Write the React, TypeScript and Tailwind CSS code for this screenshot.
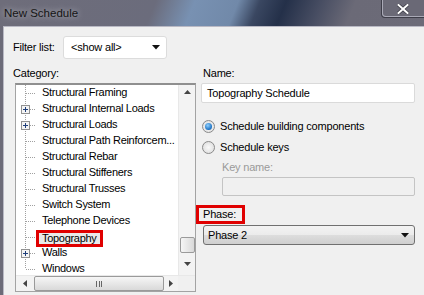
import React from "react";

type Row = { label: string; plus?: boolean; selected?: boolean; last?: boolean };

const rows: Row[] = [
  { label: "Structural Framing" },
  { label: "Structural Internal Loads", plus: true },
  { label: "Structural Loads", plus: true },
  { label: "Structural Path Reinforcem..." },
  { label: "Structural Rebar" },
  { label: "Structural Stiffeners" },
  { label: "Structural Trusses" },
  { label: "Switch System" },
  { label: "Telephone Devices" },
  { label: "Topography", selected: true },
  { label: "Walls", plus: true },
  { label: "Windows", last: true },
];

function TreeLines({ plus, last }: { plus?: boolean; last?: boolean }) {
  return (
    <svg width="20" height="16" className="shrink-0" shapeRendering="crispEdges">
      <line x1="9.5" y1="0" x2="9.5" y2={last ? 8 : 16} stroke="#a0a0a0" strokeDasharray="1 1" />
      <line x1="10" y1="8.5" x2="20" y2="8.5" stroke="#a0a0a0" strokeDasharray="1 1" />
      {plus && (
        <>
          <rect x="5.5" y="4.5" width="8" height="8" fill="#f4f4f4" stroke="#919191" />
          <line x1="7" y1="8.5" x2="12" y2="8.5" stroke="#1f3f7a" />
          <line x1="9.5" y1="6" x2="9.5" y2="11" stroke="#1f3f7a" />
        </>
      )}
    </svg>
  );
}

function Triangle() {
  return (
    <svg width="8" height="5" viewBox="0 0 8 5">
      <path d="M0 0 H8 L4 4.5 Z" fill="#111" />
    </svg>
  );
}

export default function App() {
  return (
    <div
      className="w-[424px] h-[295px] overflow-hidden flex flex-col bg-[#6c6b78] text-[11px] tracking-[-0.2px] text-black"
      style={{ fontFamily: '"Liberation Sans", Arial, sans-serif' }}
    >
      {/* title bar */}
      <div className="h-[26px] shrink-0 flex items-start justify-between bg-[linear-gradient(112deg,#6e6d7a_0%,#6b6c7c_36%,#7891b2_45%,#7189a9_55%,#3a4761_60%,#243049_66%,#474d62_74%,#6b6a77_82%,#6c6b78_100%)]">
        <div className="pl-[4px] pt-[5px] text-[11.5px] tracking-normal text-[#151515] [text-shadow:0_0_6px_rgba(255,255,255,0.6)]">
          New Schedule
        </div>
        <div className="w-[44px] h-[18px] -mr-[1px] border border-t-0 border-[#3d3d48] rounded-bl-[4px] shadow-[inset_1px_-1px_0_#a9a9b6] bg-[#6a6976] flex items-center justify-center">
          <svg width="12" height="10" viewBox="0 0 12 10">
            <path d="M1.5 1 L10.5 9 M10.5 1 L1.5 9" stroke="#3a3a44" strokeWidth="3.4" strokeLinecap="square" />
            <path d="M1.5 1 L10.5 9 M10.5 1 L1.5 9" stroke="#ffffff" strokeWidth="2" strokeLinecap="square" />
          </svg>
        </div>
      </div>

      {/* body */}
      <div className="flex-1 flex pl-[3px]">
        <div className="flex-1 bg-[#f0f0f0] border-l border-t border-[#b9b9c4] pl-[9px] pt-[9px]">
          {/* filter row */}
          <div className="flex items-center h-[23px]">
            <span className="w-[50px]">Filter list:</span>
            <div className="w-[104px] h-[23px] bg-white border border-[#dcdcdc] rounded-[3px] flex items-center justify-between pl-[7px] pr-[6px]">
              <span>&lt;show all&gt;</span>
              <Triangle />
            </div>
          </div>

          <div className="flex mt-[8px]">
            {/* left column */}
            <div className="w-[183px] flex flex-col">
              <div className="h-[12px] leading-[12px]">Category:</div>
              <div className="mt-[4px] ml-[2px] w-[181px] h-[209px] border border-[#a3a3a3] border-t-2 border-t-[#8f8f8f] bg-white flex flex-col">
                <div className="flex flex-1 min-h-0">
                  <div className="flex-1 overflow-hidden flex flex-col tracking-[-0.3px]">
                    {rows.map((r) => (
                      <div key={r.label} className="h-[16px] flex items-start shrink-0">
                        <TreeLines plus={r.plus} last={r.last} />
                        <span
                          className={
                            r.selected
                              ? "relative h-[17px] mt-[1px] -mb-[2px] border-[3px] border-[#e00000] bg-[#eaeaea] pl-[3px] pr-[3px] leading-[11px] whitespace-nowrap"
                              : "h-[16px] pl-[6px] leading-[15px] whitespace-nowrap"
                          }
                        >
                          {r.label}
                        </span>
                      </div>
                    ))}
                  </div>
                  {/* vertical scrollbar */}
                  <div className="w-[17px] bg-[#f3f3f3] border-l border-[#e8e8e8] flex flex-col items-center">
                    <div className="h-[14px] flex items-center justify-center">
                      <svg width="7" height="4" viewBox="0 0 7 4">
                        <path d="M0 4 H7 L3.5 0 Z" fill="#444" />
                      </svg>
                    </div>
                    <div className="flex-1" />
                    <div className="w-[15px] h-[16px] rounded-[2px] border border-[#9a9a9a] bg-[linear-gradient(90deg,#f6f6f6,#d9d9d9)]" />
                    <div className="h-[22px] flex items-center justify-center">
                      <svg width="7" height="4" viewBox="0 0 7 4">
                        <path d="M0 0 H7 L3.5 4 Z" fill="#444" />
                      </svg>
                    </div>
                  </div>
                </div>
                {/* horizontal scrollbar */}
                <div className="h-[16px] flex bg-[#f3f3f3] border-t border-[#e8e8e8]">
                  <div className="w-[18px] flex items-center justify-center">
                    <svg width="4" height="7" viewBox="0 0 4 7">
                      <path d="M4 0 V7 L0 3.5 Z" fill="#444" />
                    </svg>
                  </div>
                  <div className="w-[130px] h-[15px] rounded-[2px] border border-[#9a9a9a] bg-[linear-gradient(180deg,#f6f6f6,#d9d9d9)] flex items-center justify-center">
                    <svg width="8" height="6" viewBox="0 0 8 6" shapeRendering="crispEdges">
                      <path d="M1.5 0 V6 M4 0 V6 M6.5 0 V6" stroke="#666" />
                    </svg>
                  </div>
                  <div className="w-[14px] flex items-center justify-center">
                    <svg width="4" height="7" viewBox="0 0 4 7">
                      <path d="M0 0 V7 L4 3.5 Z" fill="#444" />
                    </svg>
                  </div>
                  <div className="flex-1 bg-[#f0f0f0]" />
                </div>
              </div>
            </div>

            {/* right column */}
            <div className="ml-[5px] w-[214px] flex flex-col">
              <div className="h-[12px] leading-[12px] pl-[2px]">Name:</div>
              <div className="mt-[4px] h-[20px] bg-white border border-[#dadada] rounded-[2px] flex items-center pl-[5px]">
                Topography Schedule
              </div>

              <div className="mt-[16px] flex items-center h-[14px] pl-[1px]">
                <span className="w-[13px] h-[13px] rounded-full border border-[#8a8a8a] bg-[radial-gradient(circle,#fafafa,#dcdcdc)] flex items-center justify-center">
                  <span className="w-[7px] h-[7px] rounded-full bg-[radial-gradient(circle_at_40%_35%,#8fd0ff,#1a6fc0_70%,#0e4f95)]" />
                </span>
                <span className="ml-[5px]">Schedule building components</span>
              </div>
              <div className="mt-[7px] flex items-center h-[14px] pl-[1px]">
                <span className="w-[13px] h-[13px] rounded-full border border-[#8a8a8a] bg-[radial-gradient(circle,#fafafa,#d9d9d9)]" />
                <span className="ml-[5px]">Schedule keys</span>
              </div>

              <div className="ml-[21px] mt-[7px] h-[12px] leading-[12px] text-[#9a9a9a]">Key name:</div>
              <div className="ml-[21px] mt-[4px] h-[19px] bg-[#f0f0f0] border border-[#c4c4c4] rounded-[2px]" />

              <div className="-ml-[5px] mt-[9px] w-[49px] h-[19px] border-[3px] border-[#e00000] pl-[4px] flex items-center">
                Phase:
              </div>
              <div className="mt-[1px] ml-[2px] h-[20px] rounded-[3px] border border-[#707070] bg-[linear-gradient(180deg,#f3f3f3_0%,#ebebeb_50%,#dddddd_51%,#cfcfcf_100%)] flex items-center justify-between pl-[4px] pr-[5px]">
                <span>Phase 2</span>
                <Triangle />
              </div>
            </div>
          </div>
        </div>
      </div>
    </div>
  );
}
